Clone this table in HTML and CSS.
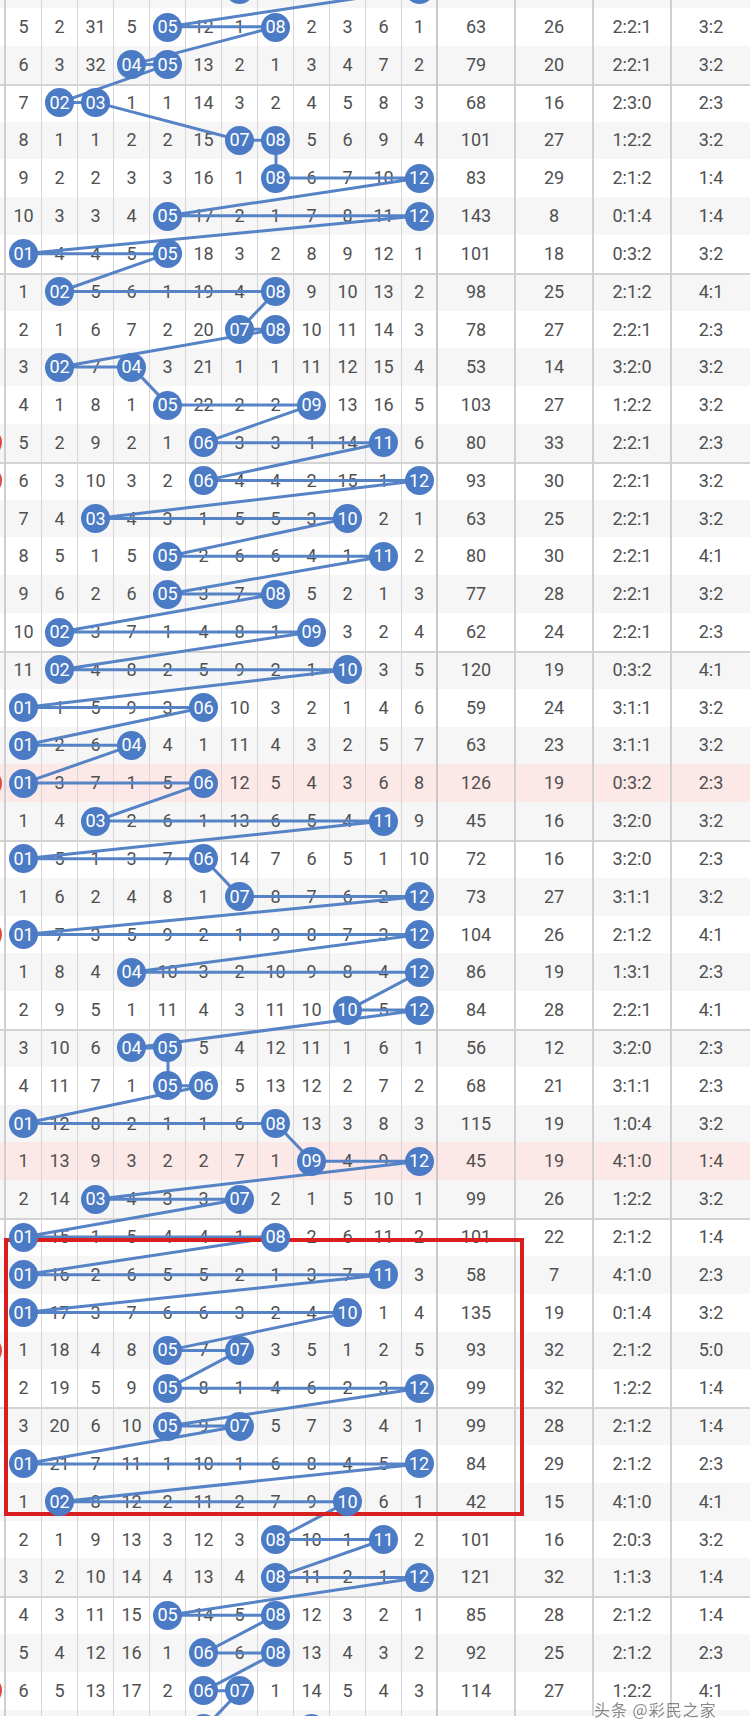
FILE: index.html
```html
<!DOCTYPE html>
<html lang="zh-CN">
<head>
<meta charset="utf-8">
<title>走势图</title>
<link rel="stylesheet" href="styles.css">
</head>
<body>
<div class="chart">
<div class="row alt edge"><span></span><span></span><span></span><span></span><span></span><span></span><span></span><span><b></b></span><span></span><span></span><span></span><span></span><span><b></b></span><span></span><span></span><span></span><span></span></div>
<div class="row"><span></span><span>5</span><span>2</span><span>31</span><span>5</span><span><b>05</b></span><span>12</span><span>1</span><span><b>08</b></span><span>2</span><span>3</span><span>6</span><span>1</span><span>63</span><span>26</span><span>2:2:1</span><span>3:2</span></div>
<div class="row alt"><span></span><span>6</span><span>3</span><span>32</span><span><b>04</b></span><span><b>05</b></span><span>13</span><span>2</span><span>1</span><span>3</span><span>4</span><span>7</span><span>2</span><span>79</span><span>20</span><span>2:2:1</span><span>3:2</span></div>
<div class="row grp"><span></span><span>7</span><span><b>02</b></span><span><b>03</b></span><span>1</span><span>1</span><span>14</span><span>3</span><span>2</span><span>4</span><span>5</span><span>8</span><span>3</span><span>68</span><span>16</span><span>2:3:0</span><span>2:3</span></div>
<div class="row alt"><span></span><span>8</span><span>1</span><span>1</span><span>2</span><span>2</span><span>15</span><span><b>07</b></span><span><b>08</b></span><span>5</span><span>6</span><span>9</span><span>4</span><span>101</span><span>27</span><span>1:2:2</span><span>3:2</span></div>
<div class="row"><span></span><span>9</span><span>2</span><span>2</span><span>3</span><span>3</span><span>16</span><span>1</span><span><b>08</b></span><span>6</span><span>7</span><span>10</span><span><b>12</b></span><span>83</span><span>29</span><span>2:1:2</span><span>1:4</span></div>
<div class="row alt"><span></span><span>10</span><span>3</span><span>3</span><span>4</span><span><b>05</b></span><span>17</span><span>2</span><span>1</span><span>7</span><span>8</span><span>11</span><span><b>12</b></span><span>143</span><span>8</span><span>0:1:4</span><span>1:4</span></div>
<div class="row"><span></span><span><b>01</b></span><span>4</span><span>4</span><span>5</span><span><b>05</b></span><span>18</span><span>3</span><span>2</span><span>8</span><span>9</span><span>12</span><span>1</span><span>101</span><span>18</span><span>0:3:2</span><span>3:2</span></div>
<div class="row alt grp"><span></span><span>1</span><span><b>02</b></span><span>5</span><span>6</span><span>1</span><span>19</span><span>4</span><span><b>08</b></span><span>9</span><span>10</span><span>13</span><span>2</span><span>98</span><span>25</span><span>2:1:2</span><span>4:1</span></div>
<div class="row"><span></span><span>2</span><span>1</span><span>6</span><span>7</span><span>2</span><span>20</span><span><b>07</b></span><span><b>08</b></span><span>10</span><span>11</span><span>14</span><span>3</span><span>78</span><span>27</span><span>2:2:1</span><span>2:3</span></div>
<div class="row alt"><span></span><span>3</span><span><b>02</b></span><span>7</span><span><b>04</b></span><span>3</span><span>21</span><span>1</span><span>1</span><span>11</span><span>12</span><span>15</span><span>4</span><span>53</span><span>14</span><span>3:2:0</span><span>3:2</span></div>
<div class="row"><span></span><span>4</span><span>1</span><span>8</span><span>1</span><span><b>05</b></span><span>22</span><span>2</span><span>2</span><span><b>09</b></span><span>13</span><span>16</span><span>5</span><span>103</span><span>27</span><span>1:2:2</span><span>3:2</span></div>
<div class="row alt"><span><i></i></span><span>5</span><span>2</span><span>9</span><span>2</span><span>1</span><span><b>06</b></span><span>3</span><span>3</span><span>1</span><span>14</span><span><b>11</b></span><span>6</span><span>80</span><span>33</span><span>2:2:1</span><span>2:3</span></div>
<div class="row grp"><span><i></i></span><span>6</span><span>3</span><span>10</span><span>3</span><span>2</span><span><b>06</b></span><span>4</span><span>4</span><span>2</span><span>15</span><span>1</span><span><b>12</b></span><span>93</span><span>30</span><span>2:2:1</span><span>3:2</span></div>
<div class="row alt"><span></span><span>7</span><span>4</span><span><b>03</b></span><span>4</span><span>3</span><span>1</span><span>5</span><span>5</span><span>3</span><span><b>10</b></span><span>2</span><span>1</span><span>63</span><span>25</span><span>2:2:1</span><span>3:2</span></div>
<div class="row"><span></span><span>8</span><span>5</span><span>1</span><span>5</span><span><b>05</b></span><span>2</span><span>6</span><span>6</span><span>4</span><span>1</span><span><b>11</b></span><span>2</span><span>80</span><span>30</span><span>2:2:1</span><span>4:1</span></div>
<div class="row alt"><span></span><span>9</span><span>6</span><span>2</span><span>6</span><span><b>05</b></span><span>3</span><span>7</span><span><b>08</b></span><span>5</span><span>2</span><span>1</span><span>3</span><span>77</span><span>28</span><span>2:2:1</span><span>3:2</span></div>
<div class="row"><span></span><span>10</span><span><b>02</b></span><span>3</span><span>7</span><span>1</span><span>4</span><span>8</span><span>1</span><span><b>09</b></span><span>3</span><span>2</span><span>4</span><span>62</span><span>24</span><span>2:2:1</span><span>2:3</span></div>
<div class="row alt grp"><span></span><span>11</span><span><b>02</b></span><span>4</span><span>8</span><span>2</span><span>5</span><span>9</span><span>2</span><span>1</span><span><b>10</b></span><span>3</span><span>5</span><span>120</span><span>19</span><span>0:3:2</span><span>4:1</span></div>
<div class="row"><span></span><span><b>01</b></span><span>1</span><span>5</span><span>9</span><span>3</span><span><b>06</b></span><span>10</span><span>3</span><span>2</span><span>1</span><span>4</span><span>6</span><span>59</span><span>24</span><span>3:1:1</span><span>3:2</span></div>
<div class="row alt"><span></span><span><b>01</b></span><span>2</span><span>6</span><span><b>04</b></span><span>4</span><span>1</span><span>11</span><span>4</span><span>3</span><span>2</span><span>5</span><span>7</span><span>63</span><span>23</span><span>3:1:1</span><span>3:2</span></div>
<div class="row hot"><span><i></i></span><span><b>01</b></span><span>3</span><span>7</span><span>1</span><span>5</span><span><b>06</b></span><span>12</span><span>5</span><span>4</span><span>3</span><span>6</span><span>8</span><span>126</span><span>19</span><span>0:3:2</span><span>2:3</span></div>
<div class="row alt"><span></span><span>1</span><span>4</span><span><b>03</b></span><span>2</span><span>6</span><span>1</span><span>13</span><span>6</span><span>5</span><span>4</span><span><b>11</b></span><span>9</span><span>45</span><span>16</span><span>3:2:0</span><span>3:2</span></div>
<div class="row grp"><span></span><span><b>01</b></span><span>5</span><span>1</span><span>3</span><span>7</span><span><b>06</b></span><span>14</span><span>7</span><span>6</span><span>5</span><span>1</span><span>10</span><span>72</span><span>16</span><span>3:2:0</span><span>2:3</span></div>
<div class="row alt"><span></span><span>1</span><span>6</span><span>2</span><span>4</span><span>8</span><span>1</span><span><b>07</b></span><span>8</span><span>7</span><span>6</span><span>2</span><span><b>12</b></span><span>73</span><span>27</span><span>3:1:1</span><span>3:2</span></div>
<div class="row"><span><i></i></span><span><b>01</b></span><span>7</span><span>3</span><span>5</span><span>9</span><span>2</span><span>1</span><span>9</span><span>8</span><span>7</span><span>3</span><span><b>12</b></span><span>104</span><span>26</span><span>2:1:2</span><span>4:1</span></div>
<div class="row alt"><span></span><span>1</span><span>8</span><span>4</span><span><b>04</b></span><span>10</span><span>3</span><span>2</span><span>10</span><span>9</span><span>8</span><span>4</span><span><b>12</b></span><span>86</span><span>19</span><span>1:3:1</span><span>2:3</span></div>
<div class="row"><span></span><span>2</span><span>9</span><span>5</span><span>1</span><span>11</span><span>4</span><span>3</span><span>11</span><span>10</span><span><b>10</b></span><span>5</span><span><b>12</b></span><span>84</span><span>28</span><span>2:2:1</span><span>4:1</span></div>
<div class="row alt grp"><span></span><span>3</span><span>10</span><span>6</span><span><b>04</b></span><span><b>05</b></span><span>5</span><span>4</span><span>12</span><span>11</span><span>1</span><span>6</span><span>1</span><span>56</span><span>12</span><span>3:2:0</span><span>2:3</span></div>
<div class="row"><span></span><span>4</span><span>11</span><span>7</span><span>1</span><span><b>05</b></span><span><b>06</b></span><span>5</span><span>13</span><span>12</span><span>2</span><span>7</span><span>2</span><span>68</span><span>21</span><span>3:1:1</span><span>2:3</span></div>
<div class="row alt"><span></span><span><b>01</b></span><span>12</span><span>8</span><span>2</span><span>1</span><span>1</span><span>6</span><span><b>08</b></span><span>13</span><span>3</span><span>8</span><span>3</span><span>115</span><span>19</span><span>1:0:4</span><span>3:2</span></div>
<div class="row hot"><span></span><span>1</span><span>13</span><span>9</span><span>3</span><span>2</span><span>2</span><span>7</span><span>1</span><span><b>09</b></span><span>4</span><span>9</span><span><b>12</b></span><span>45</span><span>19</span><span>4:1:0</span><span>1:4</span></div>
<div class="row alt"><span></span><span>2</span><span>14</span><span><b>03</b></span><span>4</span><span>3</span><span>3</span><span><b>07</b></span><span>2</span><span>1</span><span>5</span><span>10</span><span>1</span><span>99</span><span>26</span><span>1:2:2</span><span>3:2</span></div>
<div class="row grp"><span></span><span><b>01</b></span><span>15</span><span>1</span><span>5</span><span>4</span><span>4</span><span>1</span><span><b>08</b></span><span>2</span><span>6</span><span>11</span><span>2</span><span>101</span><span>22</span><span>2:1:2</span><span>1:4</span></div>
<div class="row alt"><span></span><span><b>01</b></span><span>16</span><span>2</span><span>6</span><span>5</span><span>5</span><span>2</span><span>1</span><span>3</span><span>7</span><span><b>11</b></span><span>3</span><span>58</span><span>7</span><span>4:1:0</span><span>2:3</span></div>
<div class="row"><span></span><span><b>01</b></span><span>17</span><span>3</span><span>7</span><span>6</span><span>6</span><span>3</span><span>2</span><span>4</span><span><b>10</b></span><span>1</span><span>4</span><span>135</span><span>19</span><span>0:1:4</span><span>3:2</span></div>
<div class="row alt"><span><i></i></span><span>1</span><span>18</span><span>4</span><span>8</span><span><b>05</b></span><span>7</span><span><b>07</b></span><span>3</span><span>5</span><span>1</span><span>2</span><span>5</span><span>93</span><span>32</span><span>2:1:2</span><span>5:0</span></div>
<div class="row"><span></span><span>2</span><span>19</span><span>5</span><span>9</span><span><b>05</b></span><span>8</span><span>1</span><span>4</span><span>6</span><span>2</span><span>3</span><span><b>12</b></span><span>99</span><span>32</span><span>1:2:2</span><span>1:4</span></div>
<div class="row alt grp"><span></span><span>3</span><span>20</span><span>6</span><span>10</span><span><b>05</b></span><span>9</span><span><b>07</b></span><span>5</span><span>7</span><span>3</span><span>4</span><span>1</span><span>99</span><span>28</span><span>2:1:2</span><span>1:4</span></div>
<div class="row"><span></span><span><b>01</b></span><span>21</span><span>7</span><span>11</span><span>1</span><span>10</span><span>1</span><span>6</span><span>8</span><span>4</span><span>5</span><span><b>12</b></span><span>84</span><span>29</span><span>2:1:2</span><span>2:3</span></div>
<div class="row alt"><span></span><span>1</span><span><b>02</b></span><span>8</span><span>12</span><span>2</span><span>11</span><span>2</span><span>7</span><span>9</span><span><b>10</b></span><span>6</span><span>1</span><span>42</span><span>15</span><span>4:1:0</span><span>4:1</span></div>
<div class="row"><span></span><span>2</span><span>1</span><span>9</span><span>13</span><span>3</span><span>12</span><span>3</span><span><b>08</b></span><span>10</span><span>1</span><span><b>11</b></span><span>2</span><span>101</span><span>16</span><span>2:0:3</span><span>3:2</span></div>
<div class="row alt"><span></span><span>3</span><span>2</span><span>10</span><span>14</span><span>4</span><span>13</span><span>4</span><span><b>08</b></span><span>11</span><span>2</span><span>1</span><span><b>12</b></span><span>121</span><span>32</span><span>1:1:3</span><span>1:4</span></div>
<div class="row grp"><span></span><span>4</span><span>3</span><span>11</span><span>15</span><span><b>05</b></span><span>14</span><span>5</span><span><b>08</b></span><span>12</span><span>3</span><span>2</span><span>1</span><span>85</span><span>28</span><span>2:1:2</span><span>1:4</span></div>
<div class="row alt"><span></span><span>5</span><span>4</span><span>12</span><span>16</span><span>1</span><span><b>06</b></span><span>6</span><span><b>08</b></span><span>13</span><span>4</span><span>3</span><span>2</span><span>92</span><span>25</span><span>2:1:2</span><span>2:3</span></div>
<div class="row"><span><i></i></span><span>6</span><span>5</span><span>13</span><span>17</span><span>2</span><span><b>06</b></span><span><b>07</b></span><span>1</span><span>14</span><span>5</span><span>4</span><span>3</span><span>114</span><span>27</span><span>1:2:2</span><span>4:1</span></div>
<div class="row alt edge"><span></span><span></span><span></span><span></span><span></span><span></span><span><b></b></span><span></span><span></span><span><b></b></span><span></span><span></span><span></span><span></span><span></span><span></span><span></span></div>

<svg class="trend" width="750" height="1780" viewBox="0 0 750 1780" aria-hidden="true">
<polyline points="240,-19 240,18.9 420,18.9 168,56.7 276,56.7 132,94.6 168,94.6 60,132.4 96,132.4 240,170.2 276,170.2 276,208 420,208 168,245.8 420,245.8 24,283.7 168,283.7 60,321.5 276,321.5 240,359.3 276,359.3 60,397.1 132,397.1 168,434.9 312,434.9 204,472.8 384,472.8 204,510.6 420,510.6 96,548.4 348,548.4 168,586.2 384,586.2 168,624 276,624 60,661.9 312,661.9 60,699.7 348,699.7 24,737.5 204,737.5 24,775.3 132,775.3 24,813.1 204,813.1 96,851 384,851 24,888.8 204,888.8 240,926.6 420,926.6 24,964.4 420,964.4 132,1002.2 420,1002.2 348,1040.1 420,1040.1 132,1077.9 168,1077.9 168,1115.7 204,1115.7 24,1153.5 276,1153.5 312,1191.3 420,1191.3 96,1229.2 240,1229.2 24,1267 276,1267 24,1304.8 384,1304.8 24,1342.6 348,1342.6 168,1380.4 240,1380.4 168,1418.3 420,1418.3 168,1456.1 240,1456.1 24,1493.9 420,1493.9 60,1531.7 348,1531.7 276,1569.5 384,1569.5 276,1607.4 420,1607.4 168,1645.2 276,1645.2 204,1683 276,1683 204,1720.8 240,1720.8 204,1758.6 312,1758.6"/>
</svg>
<div class="focus"></div>
</div>
<div class="mark">头条 @彩民之家</div>
</body>
</html>
```

FILE: styles.css
```css
html, body {
  margin: 0;
  padding: 0;
  background: #fff;
}

body {
  display: flow-root;
  position: relative;
  width: 750px;
  height: 1734px;
  overflow: hidden;
  font-family: Roboto, "Noto Sans", "Noto Sans CJK SC", sans-serif;
  color: #505050;
}

.chart {
  position: relative;
  margin-top: -29.73px;
  height: 1745.73px;
  overflow: hidden;
}

.row {
  display: grid;
  grid-template-columns: 6px repeat(12, 36px) repeat(4, 78px);
  height: 37.82px;
  background: #fff;
}

.row.alt {
  background: #f6f6f6;
}

.row.hot {
  background: #fde8e8;
}

.row.grp {
  box-shadow: inset 0 2px 0 #d3d3d3;
}

.row > span {
  display: flex;
  align-items: center;
  justify-content: center;
  box-sizing: border-box;
  border-right: 1px solid #d6d6d6;
  font-size: 18px;
  line-height: 1;
  white-space: nowrap;
}

.row > span:first-child {
  justify-content: flex-end;
  border-right: 2px solid #cfcfcf;
}

.row > span:nth-child(13) {
  border-right: 2px solid #c9c9c9;
}

.row > span:nth-child(n+14) {
  border-right: 2px solid #d0d0d0;
}

.row > span:last-child {
  border-right: 0;
}

.row b {
  position: relative;
  z-index: 3;
  flex-shrink: 0;
  display: flex;
  align-items: center;
  justify-content: center;
  width: 29px;
  height: 29px;
  border-radius: 50%;
  background: #4b7bc4;
  color: #fff;
  font-weight: 400;
  font-size: 18px;
}

.row i {
  flex-shrink: 0;
  display: block;
  width: 29px;
  height: 29px;
  margin-right: 2px;
  border-radius: 50%;
  background: #e04848;
}

.trend {
  position: absolute;
  left: 0;
  top: 0;
  z-index: 1;
  overflow: visible;
}

.trend polyline {
  fill: none;
  stroke: #5682c6;
  stroke-width: 3;
  stroke-linejoin: round;
}

.focus {
  position: absolute;
  left: 4px;
  top: 1267.7px;
  width: 520px;
  height: 278px;
  box-sizing: border-box;
  border: 4.5px solid #d81e1e;
  z-index: 2;
}

.mark {
  position: absolute;
  left: 594px;
  top: 1697px;
  z-index: 5;
  font-family: "Noto Sans CJK SC", "Noto Sans", sans-serif;
  font-size: 16px;
  letter-spacing: 1px;
  color: rgba(40, 40, 40, 0.55);
  filter: blur(0.6px);
}
```
